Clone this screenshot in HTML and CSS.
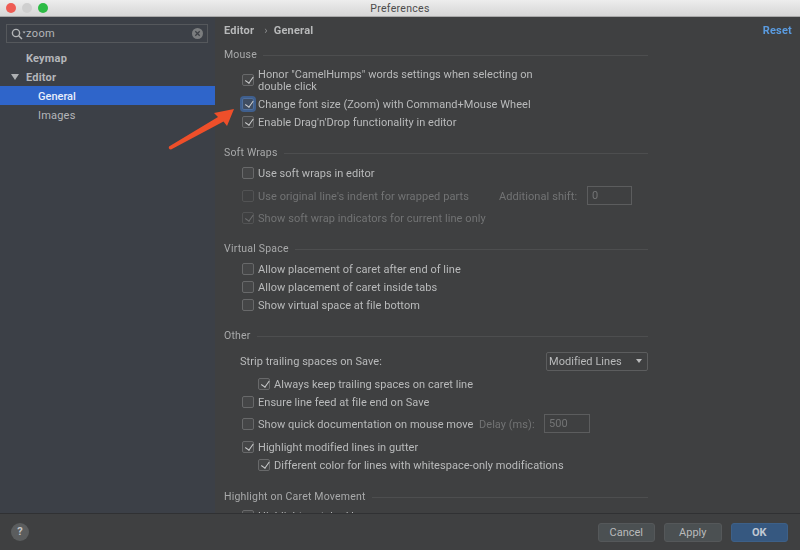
FILE: index.html
```html
<!DOCTYPE html>
<html lang="en">
<head>
<meta charset="utf-8">
<title>Preferences</title>
<link rel="stylesheet" href="styles.css">
</head>
<body>
<div class="window">
  <header class="titlebar">
    <div class="lights"><i class="light red"></i><i class="light gray"></i><i class="light green"></i></div>
    <span class="title">Preferences</span>
  </header>
  <div class="main">
    <aside class="sidebar">
      <div class="search">
        <svg class="search-icon" width="15" height="12" viewBox="0 0 15 12"><circle cx="5" cy="5" r="3.6" fill="none" stroke="#b4b6b8" stroke-width="1.4"/><path d="M7.7 7.7L11 11" stroke="#b4b6b8" stroke-width="1.5"/><path d="M11.5 3.5h3.2l-1.6 2z" fill="#b4b6b8"/></svg>
        <span class="search-text">zoom</span>
        <svg class="clear-icon" width="11" height="11" viewBox="0 0 11 11"><circle cx="5.5" cy="5.5" r="5.5" fill="#7b7d7f"/><path d="M3.3 3.3l4.4 4.4M7.7 3.3l-4.4 4.4" stroke="#3d4046" stroke-width="1.3"/></svg>
      </div>
      <nav class="tree">
        <div class="node top">Keymap</div>
        <div class="node top"><i class="twist"></i>Editor</div>
        <div class="node sub selected">General</div>
        <div class="node sub">Images</div>
      </nav>
    </aside>
    <section class="content">
      <div class="crumbs"><span class="crumb">Editor</span><span class="sep">›</span><span class="crumb">General</span><a class="reset">Reset</a></div>

      <div class="head h-mouse"><span>Mouse</span><b></b></div>
      <div class="row multi"><i class="cb on"></i><span>Honor "CamelHumps" words settings when selecting on<br>double click</span></div>
      <div class="row"><i class="cb on focus"></i><span>Change font size (Zoom) with Command+Mouse Wheel</span></div>
      <div class="row"><i class="cb on"></i><span>Enable Drag'n'Drop functionality in editor</span></div>

      <div class="head h-soft"><span>Soft Wraps</span><b></b></div>
      <div class="row tall"><i class="cb"></i><span>Use soft wraps in editor</span></div>
      <div class="row tall dim"><i class="cb"></i><span class="lead-shift">Use original line's indent for wrapped parts</span><span class="shift-label">Additional shift:</span><span class="field shift-field">0</span></div>
      <div class="row tall dim"><i class="cb on"></i><span>Show soft wrap indicators for current line only</span></div>

      <div class="head h-virtual"><span>Virtual Space</span><b></b></div>
      <div class="row"><i class="cb"></i><span>Allow placement of caret after end of line</span></div>
      <div class="row"><i class="cb"></i><span>Allow placement of caret inside tabs</span></div>
      <div class="row"><i class="cb"></i><span>Show virtual space at file bottom</span></div>

      <div class="head h-other"><span>Other</span><b></b></div>
      <div class="row tall strip"><span class="lead-strip">Strip trailing spaces on Save:</span><span class="select"><span>Modified Lines</span><i class="caret"></i></span></div>
      <div class="row nested after-strip"><i class="cb on"></i><span>Always keep trailing spaces on caret line</span></div>
      <div class="row"><i class="cb"></i><span>Ensure line feed at file end on Save</span></div>
      <div class="row tall quick"><i class="cb"></i><span class="lead-quick">Show quick documentation on mouse move</span><span class="delay-label">Delay (ms):</span><span class="field delay-field">500</span></div>
      <div class="row after-quick"><i class="cb on"></i><span>Highlight modified lines in gutter</span></div>
      <div class="row nested"><i class="cb on"></i><span>Different color for lines with whitespace-only modifications</span></div>

      <div class="head h-caret"><span>Highlight on Caret Movement</span><b></b></div>
      <div class="row cut"><i class="cb"></i><span>Highlight matched brace</span></div>
    </section>
  </div>
  <footer class="footer">
    <span class="help">?</span>
    <div class="buttons">
      <span class="btn">Cancel</span>
      <span class="btn">Apply</span>
      <span class="btn primary">OK</span>
    </div>
  </footer>
  <svg class="arrow" width="70" height="45" viewBox="0 0 70 45"><path d="M1 37.5L50 8 46 4 66 0 59 17 55.5 12.5 3 40.5Q0 40 1 37.5z" fill="#ee4f2a"/></svg>
</div>
</body>
</html>
```
FILE: styles.css
```css
* { box-sizing: border-box; }
html, body { margin: 0; height: 100%; }
body { background: #3f4041; font: 11px/12px "Roboto", "Liberation Sans", sans-serif; color: #b9babb; overflow: hidden; }
i { display: block; font-style: normal; }
.window { position: relative; width: 800px; height: 550px; display: flex; flex-direction: column; overflow: hidden; filter: blur(.35px); }
.titlebar { height: 17px; flex: none; padding-top: 1px; background: linear-gradient(#ededed, #d6d6d6); border-bottom: 1px solid #a9a9a9; position: relative; display: flex; justify-content: center; align-items: center; color: #4c4c4c; font-size: 10.5px; letter-spacing: .3px; }
.lights { position: absolute; left: 6px; top: 3px; display: flex; gap: 6px; }
.light { width: 10px; height: 10px; border-radius: 50%; }
.red { background: #ee5c54; }
.gray { background: #cfcfcf; }
.green { background: #2dbb45; }
.main { height: 496px; flex: none; display: flex; overflow: hidden; }
.sidebar { width: 215px; flex: none; background: #3c4047; padding: 7px 0 0; }
.search { margin: 0 7px 0 6px; height: 19px; border: 1px solid #55585c; display: flex; align-items: center; padding: 0 4px 0 4px; font-size: 11px; color: #b4b6b8; }
.search-text { flex: 1; letter-spacing: .4px; }
.tree { margin-top: 5px; }
.node { height: 19px; display: flex; align-items: center; font-weight: 700; padding: 2px 0 0 26px; color: #b4b6ba; position: relative; letter-spacing: .2px; }
.sub { padding-left: 38px; font-weight: 400; }
.selected { background: #2f65ca; color: #e8eefb; font-weight: 500; letter-spacing: 0; }
.twist { position: absolute; left: 11px; top: 7px; border-left: 4px solid transparent; border-right: 4px solid transparent; border-top: 6px solid #aeb0b3; }
.content { flex: 1; position: relative; padding: 0 152px 0 9px; overflow: hidden; }
.crumbs { height: 26px; display: flex; align-items: center; padding-top: 2px; font-weight: 700; color: #b8b9ba; letter-spacing: .2px; }
.sep { margin: 0 6px 0 10px; font-weight: 400; color: #8b8c8d; }
.reset { position: absolute; right: 8px; top: 8px; color: #5a9be0; font-weight: 700; }
.head { height: 14px; display: flex; align-items: center; gap: 6px; color: #a8a9aa; font-size: 10.5px; letter-spacing: .2px; }
.head b { flex: 1; height: 1px; background: #4d4e4f; }
.h-mouse { margin-top: 5px; margin-bottom: 6px; }
.h-soft { margin-top: 15px; margin-bottom: 2px; }
.h-virtual { margin-top: 12.5px; margin-bottom: 4px; }
.h-other { margin-top: 15px; margin-bottom: 7px; }
.h-caret { margin-top: 16px; margin-bottom: 3px; }
.row { height: 18px; display: flex; align-items: center; padding-left: 18px; white-space: nowrap; letter-spacing: .04px; }
.row > span { padding-top: 2px; }
.row.multi { height: 27px; padding-bottom: 3px; }
.row.tall { height: 22.5px; }
.row.nested { padding-left: 34px; }
.row.strip { padding-left: 16px; }
.row.quick { margin-top: 2px; }
.after-strip { margin-top: 2px; }
.after-quick { margin-top: 3px; }
.dim { color: #727374; letter-spacing: .08px; }
.cb { width: 12px; height: 12px; flex: none; margin-right: 4px; border: 1px solid #68696a; border-radius: 2px; background: #454647; position: relative; }
.dim .cb { border-color: #525354; background: transparent; }
.cb.on::after { content: ""; position: absolute; left: 3.5px; top: 0; width: 3.5px; height: 6.5px; border: solid #cfd0d1; border-width: 0 1.4px 1.4px 0; transform: rotate(35deg); }
.dim .cb.on::after { border-color: #6e6f70; }
.cb.focus { box-shadow: 0 0 0 2px #3f5f8e; border-color: #4f6f9c; background: #3f4d62; }
.row > .field, .row > .select { padding-top: 1px; }
.field { height: 19px; flex: none; border: 1px solid #5c5d5e; display: flex; align-items: center; padding-left: 4px; color: #737475; }
.lead-shift { width: 241px; }
.shift-label { width: 88px; }
.shift-field { width: 45px; }
.lead-quick { width: 221px; }
.delay-label { width: 65px; color: #727374; }
.delay-field { width: 46px; }
.lead-strip { width: 306px; }
.row > .select { position: relative; width: 102px; height: 19px; flex: none; border: 1px solid #5c5d5e; border-radius: 2px; display: flex; align-items: center; padding-left: 2px; }
.caret { position: absolute; right: 5px; top: 6px; border-left: 3.5px solid transparent; border-right: 3.5px solid transparent; border-top: 4px solid #b9babb; }
.footer { flex: 1; background: #3f4041; border-top: 1px solid #303133; display: flex; align-items: center; justify-content: space-between; padding: 0 12px 0 11px; }
.help { width: 18px; height: 18px; border-radius: 50%; background: #5b5d5e; color: #c4c5c6; display: flex; align-items: center; justify-content: center; font-weight: 700; }
.buttons { display: flex; gap: 9px; }
.btn { width: 57.5px; height: 19px; display: flex; align-items: center; justify-content: center; padding-top: 1px; border-radius: 3px; background: #4b5052; border: 1px solid #55585a; color: #b9babb; }
.primary { background: #365880; border-color: #3d6088; color: #c0c8d2; font-weight: 700; }
.arrow { position: absolute; left: 168px; top: 109px; }
```
